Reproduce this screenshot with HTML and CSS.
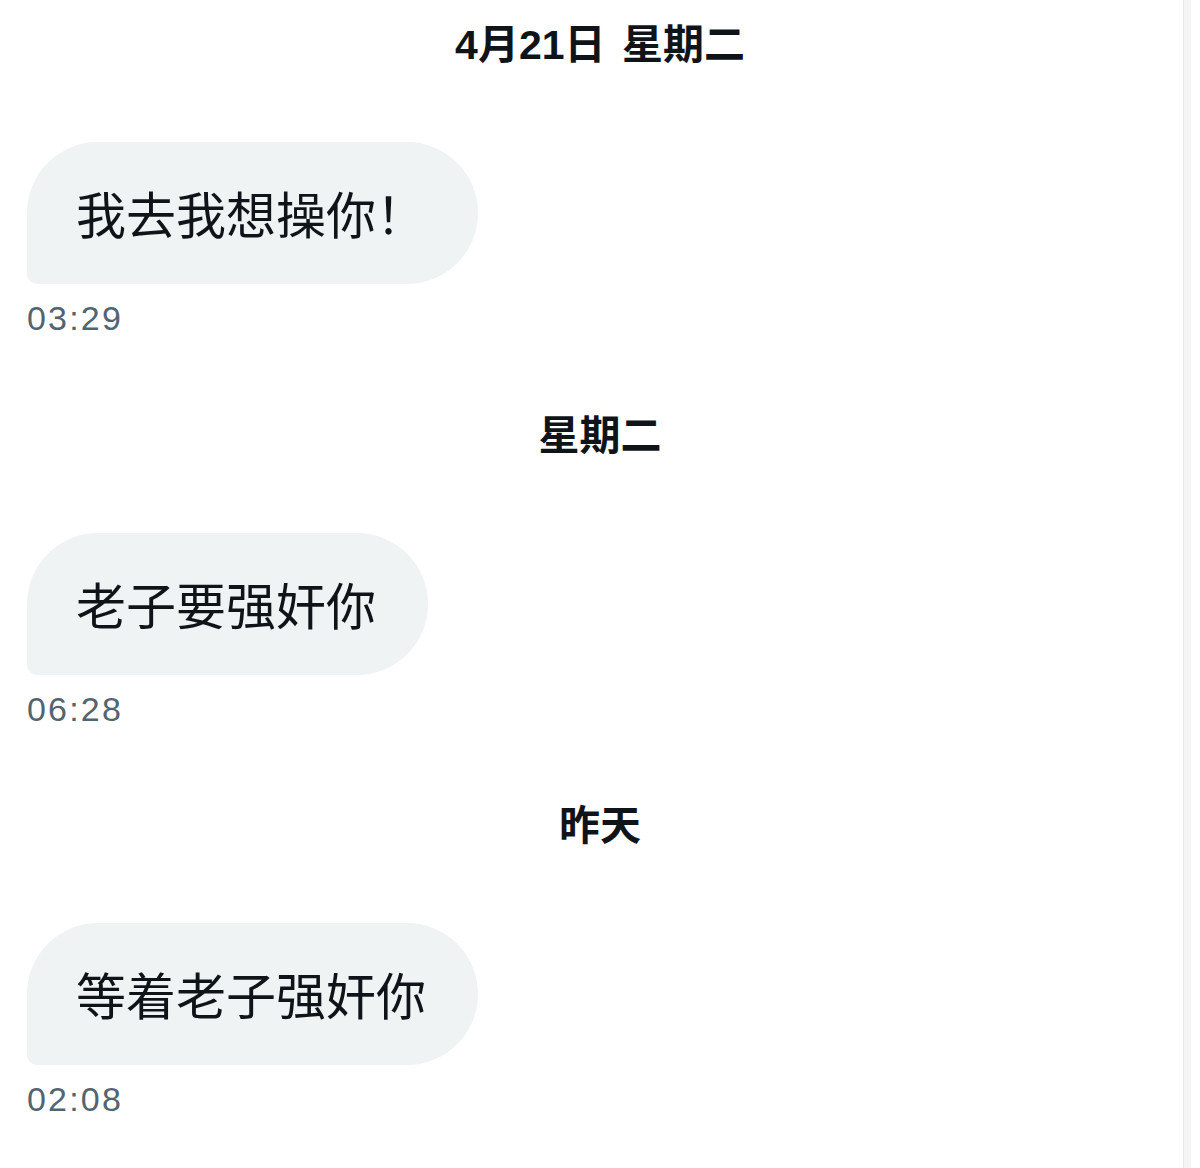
FILE: index.html
```html
<!DOCTYPE html>
<html lang="zh-CN">
<head>
<meta charset="utf-8">
<title>Messages</title>
<link rel="stylesheet" href="styles.css">
</head>
<body>
<div class="page">
  <main class="chat">
    <section class="group">
      <div class="day">4月21日 星期二</div>
      <div class="bubble">我去我想操你！</div>
      <div class="time">03:29</div>
    </section>
    <section class="group">
      <div class="day">星期二</div>
      <div class="bubble">老子要强奸你</div>
      <div class="time">06:28</div>
    </section>
    <section class="group">
      <div class="day">昨天</div>
      <div class="bubble">等着老子强奸你</div>
      <div class="time">02:08</div>
    </section>
  </main>
  <div class="scrollbar"></div>
</div>
</body>
</html>
```

FILE: styles.css
```css
html, body {
  margin: 0;
  padding: 0;
  background: #ffffff;
}
body {
  width: 1200px;
  height: 1168px;
  overflow: hidden;
  font-family: "Liberation Sans", "Noto Sans CJK SC", sans-serif;
  color: #0f1419;
}
.page {
  position: relative;
  width: 1200px;
  height: 1168px;
}
.chat {
  display: flex;
  flex-direction: column;
  padding: 17px 0 0 27px;
}
.group {
  display: flex;
  flex-direction: column;
  align-items: flex-start;
  padding-bottom: 67.6px;
}
.day {
  align-self: stretch;
  margin-left: -27px;
  text-align: center;
  font-family: "Liberation Sans", "Noto Sans CJK SC", sans-serif;
  font-weight: 700;
  font-size: 41px;
  word-spacing: 5px;
  line-height: 56px;
  height: 56px;
  color: #0f1419;
}
.bubble {
  margin-top: 69px;
  box-sizing: border-box;
  height: 142px;
  padding: 38px 52px 40px 49px;
  background: #eff3f4;
  border-radius: 71px 71px 71px 10px;
  font-family: "Noto Sans CJK SC", sans-serif;
  font-size: 50px;
  line-height: 64px;
  color: #0f1419;
  white-space: nowrap;
}
.time {
  margin-top: 12px;
  height: 44px;
  font-family: "Liberation Sans", sans-serif;
  font-size: 34px;
  line-height: 44px;
  letter-spacing: 2.2px;
  color: #536471;
}
.scrollbar {
  position: absolute;
  top: 0;
  left: 1183px;
  width: 8px;
  height: 1168px;
  box-sizing: border-box;
  background: #f4f4f4;
  border-left: 1px solid #e8e8e8;
}
```
